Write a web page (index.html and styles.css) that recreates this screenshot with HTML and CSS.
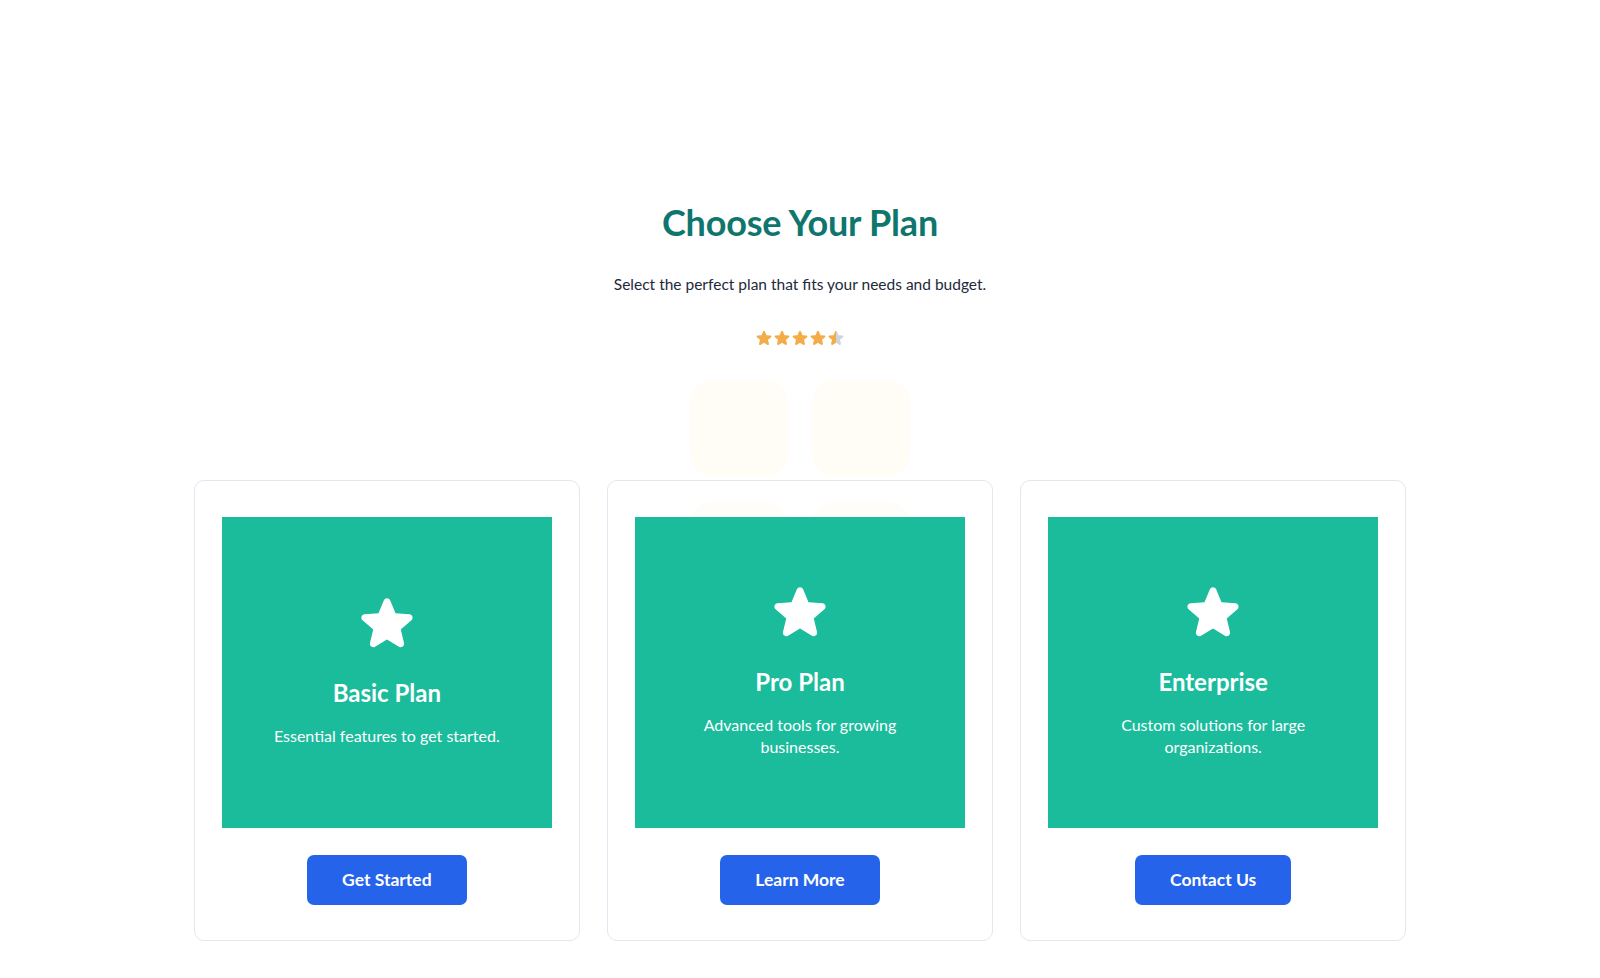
FILE: index.html
```html
<!DOCTYPE html>
<html lang="en">
<head>
<meta charset="utf-8">
<title>Choose Your Plan</title>
<link rel="stylesheet" href="styles.css">
</head>
<body>
<svg width="0" height="0" class="defs" aria-hidden="true">
  <defs>
    <symbol id="star" viewBox="0 0 24 24">
      <path d="M10.788 3.21c.448-1.077 1.976-1.077 2.424 0l2.082 5.006 5.404.434c1.164.093 1.636 1.545.749 2.305l-4.117 3.527 1.257 5.273c.271 1.136-.964 2.033-1.96 1.425L12 18.354 7.373 21.18c-.996.608-2.231-.29-1.960-1.425l1.257-5.273-4.117-3.527c-.887-.76-.415-2.212.749-2.305l5.404-.434 2.082-5.005Z"/>
    </symbol>
    <linearGradient id="half" x1="0" x2="1" y1="0" y2="0">
      <stop offset="50%" stop-color="#f2ac48"/>
      <stop offset="50%" stop-color="#cbd5e1"/>
    </linearGradient>
  </defs>
</svg>
<main class="section">
  <div class="deco" aria-hidden="true">
    <span></span><span></span><span></span><span></span>
  </div>
  <header class="intro">
    <h1 class="title">Choose Your Plan</h1>
    <p class="subtitle">Select the perfect plan that fits your needs and budget.</p>
    <div class="rating">
      <svg class="rstar"><use href="#star"/></svg>
      <svg class="rstar"><use href="#star"/></svg>
      <svg class="rstar"><use href="#star"/></svg>
      <svg class="rstar"><use href="#star"/></svg>
      <svg class="rstar half"><use href="#star"/></svg>
    </div>
  </header>
  <div class="cards">
    <article class="card">
      <div class="panel">
        <svg class="icon"><use href="#star"/></svg>
        <h2 class="plan">Basic Plan</h2>
        <p class="desc">Essential features to get started.</p>
      </div>
      <a class="btn" href="#">Get Started</a>
    </article>
    <article class="card">
      <div class="panel">
        <svg class="icon"><use href="#star"/></svg>
        <h2 class="plan">Pro Plan</h2>
        <p class="desc">Advanced tools for growing businesses.</p>
      </div>
      <a class="btn" href="#">Learn More</a>
    </article>
    <article class="card">
      <div class="panel">
        <svg class="icon"><use href="#star"/></svg>
        <h2 class="plan">Enterprise</h2>
        <p class="desc">Custom solutions for large organizations.</p>
      </div>
      <a class="btn" href="#">Contact Us</a>
    </article>
  </div>
</main>
</body>
</html>
```
FILE: styles.css
```css
* { box-sizing: border-box; }
html, body { margin: 0; padding: 0; background: #ffffff; }
body {
  font-family: "Lato", "Inter", "Noto Sans", sans-serif;
  color: #1f2937;
}
.defs { position: absolute; width: 0; height: 0; overflow: hidden; }

.section {
  position: relative;
  padding-top: 201px;
  padding-bottom: 38px;
}

.deco {
  position: absolute;
  top: 379px;
  left: 50%;
  margin-left: -110px;
  display: grid;
  grid-template-columns: 98px 98px;
  grid-auto-rows: 98px;
  gap: 24px;
  z-index: 0;
}
.deco span {
  display: block;
  background: #fffdf6;
  border-radius: 24px;
}

.intro {
  position: relative;
  z-index: 1;
  display: flex;
  flex-direction: column;
  align-items: center;
  text-align: center;
}
.title {
  margin: 0;
  font-size: 36px;
  line-height: 43px;
  font-weight: 700;
  color: #0f766e;
  letter-spacing: -0.2px;
}
.subtitle {
  margin: 28px 0 0;
  font-size: 15.5px;
  line-height: 24px;
  color: #1e293b;
}
.rating {
  margin-top: 33px;
  display: flex;
  height: 18px;
}
.rstar {
  width: 18px;
  height: 18px;
  fill: #f2ac48;
}
.rstar.half { fill: url(#half); }

.cards {
  position: relative;
  z-index: 1;
  width: 1212px;
  margin: 133px auto 0;
  display: grid;
  grid-template-columns: repeat(3, 1fr);
  gap: 27.5px;
}
.card {
  border: 1px solid #e2e8f0;
  border-radius: 10px;
  background: rgba(255, 255, 255, 0.3);
  padding: 36px 27px 35px;
  display: flex;
  flex-direction: column;
  align-items: center;
}
.panel {
  width: 100%;
  height: 311px;
  padding-bottom: 6px;
  background: #1abc9c;
  color: #ffffff;
  display: flex;
  flex-direction: column;
  align-items: center;
  justify-content: center;
  text-align: center;
}
.icon {
  width: 62px;
  height: 62px;
  fill: #ffffff;
  margin-bottom: 23px;
}
.plan {
  margin: 0;
  font-size: 24px;
  line-height: 32px;
  font-weight: 700;
}
.desc {
  margin: 16px 0 0;
  max-width: 240px;
  font-size: 16px;
  line-height: 22.5px;
}
.btn {
  margin-top: 27px;
  display: inline-block;
  background: #2563eb;
  color: #ffffff;
  text-decoration: none;
  font-size: 17.5px;
  font-weight: 700;
  line-height: 24px;
  padding: 13px 35px;
  border-radius: 7px;
}
```
